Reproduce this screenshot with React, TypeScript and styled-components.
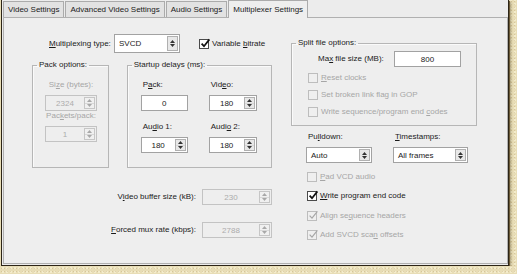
import React from "react";
import styled, { createGlobalStyle } from "styled-components";

const GlobalStyle = createGlobalStyle`
  body {
    margin: 0;
    background-color: #e8ddb6;
    background-image:
      radial-gradient(rgba(150, 120, 60, 0.22) 0.7px, transparent 1px),
      radial-gradient(rgba(255, 250, 225, 0.5) 0.7px, transparent 1px);
    background-size: 3px 3px, 4px 4px;
    background-position: 0 0, 1px 2px;
    font-family: "Liberation Sans", Arial, sans-serif;
    font-size: 8px;
    color: #000;
  }
`;

const Window = styled.div`
  box-sizing: border-box;
  width: 508px;
  height: 266px;
  margin-left: 1px;
  border: 1px solid #2c2416;
  border-top: none;
  box-shadow: 1px 1px 0 #6b5a38, 2px 2px 2px rgba(70, 55, 20, 0.45);
  background: #ececec;
  display: flex;
  flex-direction: column;
  padding: 0 0 1px 1px;
`;

const TabStrip = styled.div`
  display: flex;
  align-items: flex-end;
  height: 17px;
  gap: 1px;
  position: relative;
  z-index: 1;
`;

const Tab = styled.div<{ $active?: boolean }>`
  box-sizing: border-box;
  height: ${(p) => (p.$active ? 18 : 16)}px;
  margin-bottom: ${(p) => (p.$active ? -1 : 0)}px;
  padding: 0 4px;
  display: flex;
  align-items: center;
  border: 1px solid #ababab;
  border-bottom: none;
  background: ${(p) => (p.$active ? "#eeeeee" : "#e2e2e2")};
  color: #1a1a1a;
  white-space: nowrap;
`;

const Panel = styled.div`
  flex: 1;
  border: 1px solid #b0b0b0;
  background: #eeeeee;
  display: flex;
  padding: 16px 0 0 28px;
  gap: 19px;
`;

const LeftColumn = styled.div`
  display: flex;
  flex-direction: column;
  width: 240px;
`;

const RightColumn = styled.div`
  display: flex;
  flex-direction: column;
  width: 186px;
  padding-top: 4px;
`;

const Text = styled.span<{ $disabled?: boolean; $width?: number; $align?: string }>`
  display: inline-block;
  line-height: 10px;
  white-space: nowrap;
  color: ${(p) => (p.$disabled ? "#a6a6a6" : "#1a1a1a")};
  width: ${(p) => (p.$width ? `${p.$width}px` : "auto")};
  text-align: ${(p) => p.$align ?? "left"};
`;

const TypeRow = styled.div`
  display: flex;
  align-items: center;
  height: 19px;
  padding-left: 17px;
  gap: 6px;
`;

const BitrateSlot = styled.div`
  margin-left: 13px;
`;

const GroupRow = styled.div`
  display: flex;
  gap: 18px;
  margin-top: 7px;
`;

const Group = styled.fieldset<{ $w: number; $h: number }>`
  box-sizing: border-box;
  width: ${(p) => p.$w}px;
  height: ${(p) => p.$h}px;
  margin: 0;
  padding: 0;
  min-inline-size: 0;
  border: 1px solid #b6b6b6;
  box-shadow: inset 1px 1px 0 #fafafa;
`;

const Legend = styled.legend`
  margin-left: 4px;
  padding: 0 2px;
  line-height: 10px;
  white-space: nowrap;
  color: #1a1a1a;
`;

const PackBody = styled.div`
  display: flex;
  flex-direction: column;
  align-items: center;
  width: 52px;
  padding: 10px 0 0 12px;
`;

const DelayBody = styled.div`
  display: grid;
  grid-template-columns: 47px 48px;
  column-gap: 21px;
  row-gap: 11px;
  padding: 10px 0 0 13px;
`;

const FieldStack = styled.div<{ $center?: boolean }>`
  display: flex;
  flex-direction: column;
  align-items: ${(p) => (p.$center ? "center" : "flex-start")};
  gap: 5px;
  & > span {
    padding-left: ${(p) => (p.$center ? 0 : 2)}px;
  }
  & + & {
    margin-top: ${(p) => (p.$center ? 11 : 0)}px;
  }
`;

const Field = styled.div<{ $w: number; $h?: number; $disabled?: boolean }>`
  box-sizing: border-box;
  width: ${(p) => p.$w}px;
  height: ${(p) => p.$h ?? 16}px;
  display: flex;
  border: 1px solid ${(p) => (p.$disabled ? "#c3c3c3" : "#a2a2a2")};
  background: ${(p) => (p.$disabled ? "#eeeeee" : "#ffffff")};
`;

const FieldValue = styled.span<{ $disabled?: boolean; $left?: number }>`
  flex: 1;
  display: flex;
  align-items: center;
  justify-content: ${(p) => (p.$left !== undefined ? "flex-start" : "center")};
  padding-left: ${(p) => p.$left ?? 0}px;
  color: ${(p) => (p.$disabled ? "#acacac" : "#1a1a1a")};
`;

const SpinButtons = styled.div<{ $disabled?: boolean }>`
  box-sizing: border-box;
  width: 11px;
  margin: 1px 1px 1px 0;
  display: flex;
  flex-direction: column;
  border: 1px solid ${(p) => (p.$disabled ? "#c6c6c6" : "#b0b0b0")};
  background: ${(p) => (p.$disabled ? "#f0f0f0" : "#e8e8e8")};
`;

const SpinHalf = styled.div`
  flex: 1;
  display: flex;
  align-items: center;
  justify-content: center;
  & + & {
    border-top: 1px solid #d8d8d8;
  }
`;

const DropButton = styled.div`
  box-sizing: border-box;
  width: 11px;
  margin: 1px 1px 1px 0;
  display: flex;
  flex-direction: column;
  align-items: center;
  justify-content: center;
  gap: 1px;
  border: 1px solid #b0b0b0;
  background: #e8e8e8;
`;

const RateRow = styled.div<{ $mt: number }>`
  display: flex;
  align-items: center;
  gap: 6px;
  margin-top: ${(p) => p.$mt}px;
`;

const SplitBody = styled.div`
  display: flex;
  flex-direction: column;
  padding: 3px 0 0 0;
`;

const MaxRow = styled.div`
  display: flex;
  align-items: center;
  padding-left: 26px;
`;

const CheckList = styled.div<{ $mt: number; $row: number }>`
  display: flex;
  flex-direction: column;
  margin-top: ${(p) => p.$mt}px;
  padding-left: 16px;
  & > label {
    height: ${(p) => p.$row}px;
  }
`;

const CheckRow = styled.label`
  display: flex;
  align-items: center;
  gap: 3px;
`;

const Box = styled.span<{ $disabled?: boolean }>`
  box-sizing: border-box;
  width: 10px;
  height: 10px;
  flex: none;
  position: relative;
  border: 1px solid ${(p) => (p.$disabled ? "#bdbdbd" : "#4a4a4a")};
  background: ${(p) => (p.$disabled ? "#efefef" : "#ffffff")};
  & > svg {
    position: absolute;
    left: 0;
    top: -2px;
    overflow: visible;
  }
`;

const ComboRow = styled.div`
  display: grid;
  grid-template-columns: 66px 75px;
  column-gap: 21px;
  padding-left: 15px;
  margin-top: 6px;
`;

const ComboStack = styled.div`
  display: flex;
  flex-direction: column;
  gap: 5px;
  & > span {
    padding-left: 2px;
  }
`;

const Arrow = ({ up, disabled }: { up?: boolean; disabled?: boolean }) => (
  <svg width="5" height="3" viewBox="0 0 5 3">
    <path d={up ? "M0 3 L2.5 0 L5 3 Z" : "M0 0 L5 0 L2.5 3 Z"} fill={disabled ? "#a8a8a8" : "#333"} />
  </svg>
);

const Spinner = ({ value, width, disabled }: { value: string; width: number; disabled?: boolean }) => (
  <Field $w={width} $disabled={disabled}>
    <FieldValue $disabled={disabled}>{value}</FieldValue>
    <SpinButtons $disabled={disabled}>
      <SpinHalf>
        <Arrow up disabled={disabled} />
      </SpinHalf>
      <SpinHalf>
        <Arrow disabled={disabled} />
      </SpinHalf>
    </SpinButtons>
  </Field>
);

const Combo = ({ value, width, height }: { value: string; width: number; height?: number }) => (
  <Field $w={width} $h={height}>
    <FieldValue $left={4}>{value}</FieldValue>
    <DropButton>
      <Arrow up />
      <Arrow />
    </DropButton>
  </Field>
);

const Check = ({
  label,
  checked,
  disabled,
}: {
  label: React.ReactNode;
  checked?: boolean;
  disabled?: boolean;
}) => (
  <CheckRow>
    <Box $disabled={disabled}>
      {checked && (
        <svg width="10" height="10" viewBox="0 0 10 10">
          <path
            d="M1.6 5.6 L4 8.2 L9.4 1.4"
            fill="none"
            stroke={disabled ? "#a6a6a6" : "#111"}
            strokeWidth={disabled ? 1.2 : 1.7}
          />
        </svg>
      )}
    </Box>
    <Text $disabled={disabled}>{label}</Text>
  </CheckRow>
);

export default function App() {
  return (
    <>
      <GlobalStyle />
      <Window>
        <TabStrip>
          <Tab>Video Settings</Tab>
          <Tab>Advanced Video Settings</Tab>
          <Tab>Audio Settings</Tab>
          <Tab $active>Multiplexer Settings</Tab>
        </TabStrip>
        <Panel>
          <LeftColumn>
            <TypeRow>
              <Text $width={59}>
                <u>M</u>ultiplexing type:
              </Text>
              <Combo value="SVCD" width={66} height={19} />
              <BitrateSlot>
                <Check
                  checked
                  label={
                    <>
                      Variable <u>b</u>itrate
                    </>
                  }
                />
              </BitrateSlot>
            </TypeRow>

            <GroupRow>
              <Group $w={77} $h={108}>
                <Legend>Pack options:</Legend>
                <PackBody>
                  <FieldStack $center>
                    <Text $disabled>
                      Si<u>z</u>e (bytes):
                    </Text>
                    <Spinner value="2324" width={52} disabled />
                  </FieldStack>
                  <FieldStack $center>
                    <Text $disabled>
                      Pac<u>k</u>ets/pack:
                    </Text>
                    <Spinner value="1" width={52} disabled />
                  </FieldStack>
                </PackBody>
              </Group>

              <Group $w={146} $h={108}>
                <Legend>Startup delays (ms):</Legend>
                <DelayBody>
                  <FieldStack>
                    <Text>
                      P<u>a</u>ck:
                    </Text>
                    <Field $w={47}>
                      <FieldValue>0</FieldValue>
                    </Field>
                  </FieldStack>
                  <FieldStack>
                    <Text>
                      Vid<u>e</u>o:
                    </Text>
                    <Spinner value="180" width={48} />
                  </FieldStack>
                  <FieldStack>
                    <Text>
                      Au<u>d</u>io 1:
                    </Text>
                    <Spinner value="180" width={47} />
                  </FieldStack>
                  <FieldStack>
                    <Text>
                      Audi<u>o</u> 2:
                    </Text>
                    <Spinner value="180" width={48} />
                  </FieldStack>
                </DelayBody>
              </Group>
            </GroupRow>

            <RateRow $mt={21}>
              <Text $width={164} $align="right">
                V<u>i</u>deo buffer size (kB):
              </Text>
              <Spinner value="230" width={70} disabled />
            </RateRow>
            <RateRow $mt={17}>
              <Text $width={164} $align="right">
                <u>F</u>orced mux rate (kbps):
              </Text>
              <Spinner value="2788" width={70} disabled />
            </RateRow>
          </LeftColumn>

          <RightColumn>
            <Group $w={186} $h={88}>
              <Legend>Split file options:</Legend>
              <SplitBody>
                <MaxRow>
                  <Text $width={76}>
                    Ma<u>x</u> file size (MB):
                  </Text>
                  <Field $w={67}>
                    <FieldValue>800</FieldValue>
                  </Field>
                </MaxRow>
                <CheckList $mt={2} $row={17}>
                  <Check
                    disabled
                    label={
                      <>
                        <u>R</u>eset clocks
                      </>
                    }
                  />
                  <Check disabled label="Set broken link flag in GOP" />
                  <Check
                    disabled
                    label={
                      <>
                        Write sequence/program end <u>c</u>odes
                      </>
                    }
                  />
                </CheckList>
              </SplitBody>
            </Group>

            <ComboRow>
              <ComboStack>
                <Text>
                  Pu<u>l</u>ldown:
                </Text>
                <Combo value="Auto" width={66} />
              </ComboStack>
              <ComboStack>
                <Text>
                  <u>T</u>imestamps:
                </Text>
                <Combo value="All frames" width={75} />
              </ComboStack>
            </ComboRow>

            <CheckList $mt={4} $row={19.5}>
              <Check
                disabled
                label={
                  <>
                    <u>P</u>ad VCD audio
                  </>
                }
              />
              <Check
                checked
                label={
                  <>
                    <u>W</u>rite program end code
                  </>
                }
              />
              <Check
                checked
                disabled
                label={
                  <>
                    Align se<u>q</u>uence headers
                  </>
                }
              />
              <Check
                checked
                disabled
                label={
                  <>
                    Add SVCD sca<u>n</u> offsets
                  </>
                }
              />
            </CheckList>
          </RightColumn>
        </Panel>
      </Window>
    </>
  );
}
